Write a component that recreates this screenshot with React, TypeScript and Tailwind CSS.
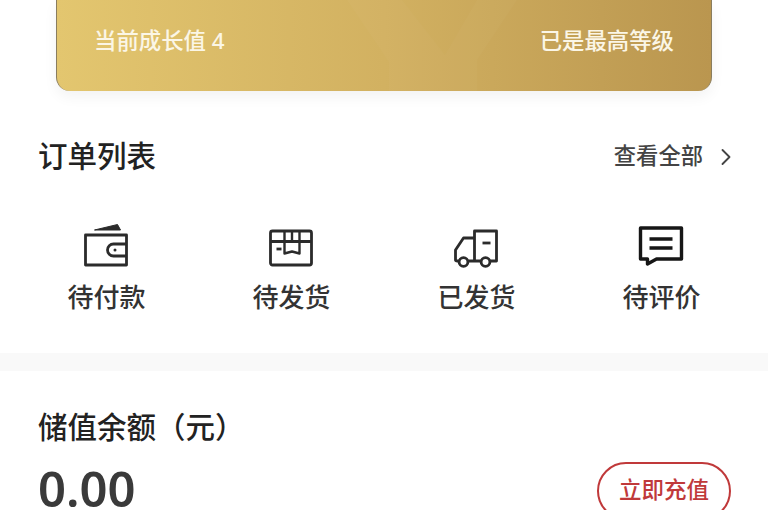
import React from 'react';
import { ChevronRight } from 'lucide-react';

const WalletIcon = () => (
  <svg width="48" height="48" viewBox="1.5 0 48 48" fill="none" stroke="#2b2b2b" strokeWidth="2.8" strokeLinejoin="round">
    <path d="M4 14H45V44H4Z" />
    <path d="M13 9 36 3.5 39 9Z" fill="#2b2b2b" strokeWidth="1" />
    <path d="M45 23H32a6 6 0 0 0 0 12H45" />
    <circle cx="33.5" cy="29" r="1.5" fill="#2b2b2b" stroke="none" />
  </svg>
);

const BoxIcon = () => (
  <svg width="48" height="48" viewBox="1.5 0 48 48" fill="none" stroke="#2b2b2b" strokeWidth="2.8" strokeLinejoin="round">
    <rect x="4" y="10" width="41" height="34" rx="2" />
    <path d="M4 20.5H45" />
    <path d="M18 10V32.5L25.5 30.5 33 32.5V10" strokeWidth="2.4" />
    <path d="M25.5 10V20.5" strokeWidth="2.4" />
    <path d="M10 28H15" />
  </svg>
);

const TruckIcon = () => (
  <svg width="48" height="48" viewBox="1.5 0 48 48" fill="none" stroke="#2b2b2b" strokeWidth="2.8" strokeLinejoin="round">
    <path d="M17 40H29M39 40H45V10H23V40" />
    <path d="M23 17H12L4 29V39C4 40 5 40 6 40H7" />
    <circle cx="12" cy="41" r="4.4" />
    <circle cx="34" cy="41" r="4.4" />
    <path d="M31 22H39" />
  </svg>
);

const CommentIcon = () => (
  <svg width="48" height="48" viewBox="1.5 0 48 48" fill="none" stroke="#161616" strokeWidth="3.4" strokeLinejoin="round">
    <path d="M4 7H45V38H20L11 43V38H4Z" />
    <path d="M13 18H36M13 27H36" />
  </svg>
);

const orders = [
  { label: '待付款', icon: <WalletIcon /> },
  { label: '待发货', icon: <BoxIcon /> },
  { label: '已发货', icon: <TruckIcon /> },
  { label: '待评价', icon: <CommentIcon /> },
];

const App: React.FC = () => {
  return (
    <div className="h-[510px] w-[768px] overflow-hidden bg-white font-['Liberation_Sans','Noto_Sans_CJK_SC',sans-serif] text-[#262626]">
      {/* 会员卡 */}
      <div className="mx-[56px] h-[91px] relative overflow-hidden rounded-b-[14px] border-x border-[#8a7d5e] bg-gradient-to-r from-[#e3c66f] via-[#d2b161] to-[#ba964f] shadow-[0_6px_14px_rgba(0,0,0,0.05)]">
        <svg className="absolute left-[270px] top-0" width="220" height="91" viewBox="0 0 220 91" fill="none">
          <path d="M20 0 62 62V91H150V60L190 0H150L118 55 75 0Z" fill="#ffffff" opacity="0.025" />
        </svg>
        <div className="relative flex h-full items-start justify-between pl-[37px] pr-[37px] pt-[27px] font-['Noto_Sans','Noto_Sans_CJK_SC',sans-serif] text-[22.4px] leading-[28px] font-medium text-[#fbf6e6]">
          <span>当前成长值 4</span>
          <span>已是最高等级</span>
        </div>
      </div>

      {/* 订单列表 */}
      <div className="mt-[46px] flex h-[40px] items-center justify-between pl-[38px] pr-[36px]">
        <span className="text-[29.5px] font-medium text-[#222222]">订单列表</span>
        <div className="flex items-center gap-[9px] text-[22.3px] font-medium text-[#444444]">
          <span className="-mt-[1px]">查看全部</span>
          <ChevronRight size={28} strokeWidth={1.6} className="-mr-[8px]" />
        </div>
      </div>

      <div className="mt-[44px] grid grid-cols-4 px-[14px]">
        {orders.map((item) => (
          <div key={item.label} className="flex flex-col items-center">
            <div className="flex h-[48px] w-[48px] items-center justify-center">{item.icon}</div>
            <span className="mt-[12px] text-[26px] leading-[34px] font-medium text-[#333333]">{item.label}</span>
          </div>
        ))}
      </div>

      <div className="mt-[38px] h-[18px] bg-[#f9f9f9]" />

      {/* 储值余额 */}
      <div className="pl-[38px] pr-[37px] pt-[38px]">
        <div className="text-[29.5px] leading-[38px] font-medium text-[#222222]">储值余额（元）</div>
        <div className="mt-[15px] flex items-start justify-between">
          <span className="mt-[4px] font-['Noto_Sans',sans-serif] text-[49px] leading-[44px] font-semibold text-[#3a3a3a]">0.00</span>
          <button className="h-[58px] w-[134px] rounded-full border-2 border-[#c0393a] text-[22.5px] font-medium text-[#c0393a]">
            立即充值
          </button>
        </div>
      </div>
    </div>
  );
};

export default App;
